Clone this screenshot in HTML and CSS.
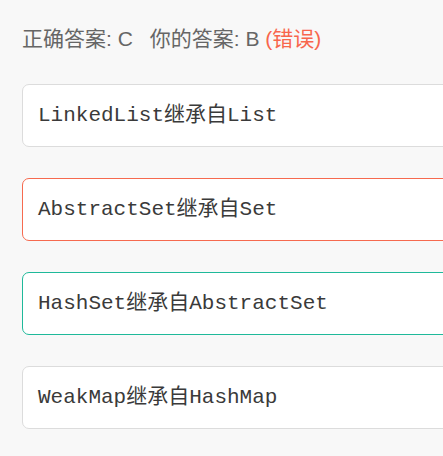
FILE: index.html
```html
<!DOCTYPE html>
<html lang="zh">
<head>
<meta charset="utf-8">
<link rel="stylesheet" href="styles.css">
</head>
<body>
<div class="quiz">
  <div class="result">正确答案: C<span class="gap"></span>你的答案: B <span class="wrong">(错误)</span></div>
  <div class="options">
    <div class="option">LinkedList继承自List</div>
    <div class="option option-wrong">AbstractSet继承自Set</div>
    <div class="option option-right">HashSet继承自AbstractSet</div>
    <div class="option">WeakMap继承自HashMap</div>
  </div>
</div>
</body>
</html>
```
FILE: styles.css
```css
html, body {
  margin: 0;
  padding: 0;
  background: #f8f8f8;
}
body {
  overflow: hidden;
}
.quiz {
  padding: 24px 0 0 22px;
  width: 460px;
}
.result {
  font-family: "Liberation Sans", "Noto Sans CJK SC", sans-serif;
  font-size: 21px;
  line-height: 30px;
  color: #666666;
}
.gap {
  display: inline-block;
  width: 17px;
}
.wrong {
  color: #f8664d;
}
.options {
  margin-top: 30px;
  display: flex;
  flex-direction: column;
  gap: 31px;
}
.option {
  background: #ffffff;
  border: 1px solid #dcdcdc;
  border-radius: 7px;
  padding: 18px 15px;
  line-height: 25px;
  font-family: "Liberation Mono", "Noto Sans CJK SC", monospace;
  font-size: 21px;
  color: #3a3a3a;
}
.option-wrong {
  border-color: #f66a4f;
}
.option-right {
  border-color: #1fb99a;
}
```
